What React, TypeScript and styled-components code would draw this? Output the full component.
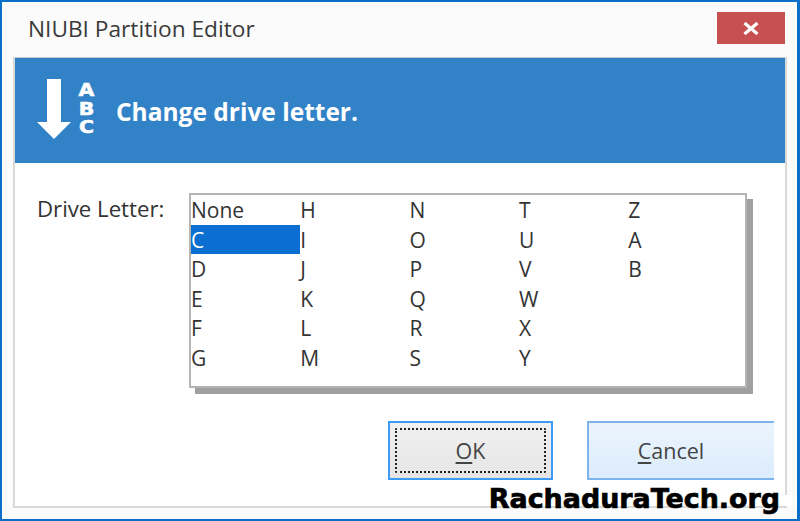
import React from 'react'
import styled, { createGlobalStyle } from 'styled-components'

const UI_FONT = '"Open Sans", "Noto Sans", "Liberation Sans", sans-serif'

const COLUMNS = [
    ['None', 'C', 'D', 'E', 'F', 'G'],
    ['H', 'I', 'J', 'K', 'L', 'M'],
    ['N', 'O', 'P', 'Q', 'R', 'S'],
    ['T', 'U', 'V', 'W', 'X', 'Y'],
    ['Z', 'A', 'B'],
]

const GlobalStyle = createGlobalStyle`
    html, body {
        margin: 0;
        padding: 0;
        background: #fff;
    }
`

const Window = styled.div`
    position: relative;
    box-sizing: border-box;
    width: 800px;
    height: 521px;
    display: flex;
    flex-direction: column;
    padding: 0 10px 11px 11px;
    overflow: hidden;
    background: #fbfbfb;
    border: 2px solid #0a6fc9;
    border-right-width: 3px;
    font-family: ${UI_FONT};
    color: #333;
`

const TitleBar = styled.div`
    flex: none;
    height: 55px;
    display: flex;
    align-items: center;
    justify-content: space-between;
    padding: 0 2px 0 15px;
`

const Title = styled.h1`
    margin: 0 0 3px;
    font-size: 22.7px;
    font-weight: 400;
    color: #3a3a3a;
`

const CloseButton = styled.div`
    width: 68px;
    height: 32px;
    margin-bottom: 3px;
    display: flex;
    align-items: center;
    justify-content: center;
    background: #c75050;
`

const Panel = styled.div`
    flex: 1;
    display: flex;
    flex-direction: column;
    background: #fff;
    border: 2px solid #d9d9d9;
    border-top: 1px solid #c8c8c8;
`

const Banner = styled.div`
    flex: none;
    height: 105px;
    display: flex;
    align-items: center;
    background: #3282c8;
    color: #fff;
    padding-left: 22px;
`

const ArrowSvg = styled.svg`
    margin-bottom: 4px;
`

const LetterStack = styled.div`
    width: 17px;
    display: flex;
    flex-direction: column;
    align-items: center;
    margin: 0 0 3px 7px;
    font-family: "DejaVu Sans", sans-serif;
    font-size: 17px;
    font-weight: 700;
    line-height: 18.5px;
    -webkit-text-stroke: 0.6px #fff;
    transform: scaleX(1.2);
`

const BannerText = styled.div`
    margin-left: 21px;
    font-size: 24.5px;
    font-weight: 700;
    padding-top: 2px;
`

const Body = styled.div`
    flex: 1;
    display: flex;
    align-items: flex-start;
    padding: 30px 0 0 22px;
`

const FieldLabel = styled.div`
    width: 152px;
    font-size: 22.2px;
    line-height: 32px;
`

const LetterList = styled.div`
    box-sizing: border-box;
    width: 558px;
    height: 195px;
    display: flex;
    background: #fff;
    border: 2px solid #b4b4b4;
    box-shadow: 6px 6px 0 #a0a0a0;
`

const LetterColumn = styled.div`
    width: 109.3px;
    display: flex;
    flex-direction: column;
`

const LetterItem = styled.div<{ selected?: boolean }>`
    height: 29.6px;
    line-height: 31px;
    font-size: 21px;
    background: ${({ selected }) => (selected ? '#0a6fd0' : 'transparent')};
    color: ${({ selected }) => (selected ? '#fff' : '#333')};
`

const ButtonRow = styled.div`
    flex: none;
    height: 59px;
    margin-bottom: 26px;
    display: flex;
    padding-left: 373px;
    gap: 34px;
`

const Button = styled.div<{ primary?: boolean }>`
    box-sizing: border-box;
    position: relative;
    width: ${({ primary }) => (primary ? '165px' : '187px')};
    display: flex;
    align-items: center;
    justify-content: center;
    padding-right: ${({ primary }) => (primary ? '0' : '21px')};
    font-size: 21.5px;
    color: #444;
    border: 2px solid ${({ primary }) => (primary ? '#3d9bf5' : '#7db4ee')};
    border-right: ${({ primary }) => (primary ? '2px solid #3d9bf5' : 'none')};
    background: ${({ primary }) =>
        primary
            ? 'linear-gradient(#f1f1f1, #e5e5e5)'
            : 'linear-gradient(#ebf4fd, #dcecfc)'};
`

const FocusRing = styled.div`
    position: absolute;
    inset: 5px;
    border: 2px dotted #222;
    border-radius: 2px;
`

const AccessKey = styled.span`
    text-decoration: underline;
    text-decoration-thickness: 2px;
    text-underline-offset: 3px;
`

const Watermark = styled.div`
    position: absolute;
    right: 17px;
    bottom: 4px;
    line-height: 32px;
    color: #000;
    font-family: "DejaVu Sans", sans-serif;
    font-size: 26.9px;
    font-weight: 700;
    -webkit-text-stroke: 0.7px #000;
`

// the watermark's white patch that cuts the window edge on the right
const EdgePatch = styled.div`
    position: absolute;
    right: -3px;
    top: 493px;
    width: 16px;
    height: 11px;
    background: #fff;
`

const ArrowIcon = () => (
    <ArrowSvg width="34" height="60" viewBox="0 0 34 60">
        <path d="M10 0h14v43h10L17 60 0 43h10z" fill="#fff" />
    </ArrowSvg>
)

const CloseIcon = () => (
    <svg width="16" height="13" viewBox="0 0 16 13">
        <path d="M1.5 1l13 11M14.5 1l-13 11" stroke="#fff" strokeWidth="3.2" fill="none" />
    </svg>
)

export default function App() {
    return (
        <>
            <GlobalStyle />
            <Window>
                <TitleBar>
                    <Title>NIUBI Partition Editor</Title>
                    <CloseButton>
                        <CloseIcon />
                    </CloseButton>
                </TitleBar>
                <Panel>
                    <Banner>
                        <ArrowIcon />
                        <LetterStack>
                            <span>A</span>
                            <span>B</span>
                            <span>C</span>
                        </LetterStack>
                        <BannerText>Change drive letter.</BannerText>
                    </Banner>
                    <Body>
                        <FieldLabel>Drive Letter:</FieldLabel>
                        <LetterList>
                            {COLUMNS.map((column) => (
                                <LetterColumn key={column[0]}>
                                    {column.map((letter) => (
                                        <LetterItem key={letter} selected={letter === 'C'}>
                                            {letter}
                                        </LetterItem>
                                    ))}
                                </LetterColumn>
                            ))}
                        </LetterList>
                    </Body>
                    <ButtonRow>
                        <Button primary>
                            <FocusRing />
                            <span>
                                <AccessKey>O</AccessKey>K
                            </span>
                        </Button>
                        <Button>
                            <span>
                                <AccessKey>C</AccessKey>ancel
                            </span>
                        </Button>
                    </ButtonRow>
                </Panel>
                <EdgePatch />
                <Watermark>RachaduraTech.org</Watermark>
            </Window>
        </>
    )
}
